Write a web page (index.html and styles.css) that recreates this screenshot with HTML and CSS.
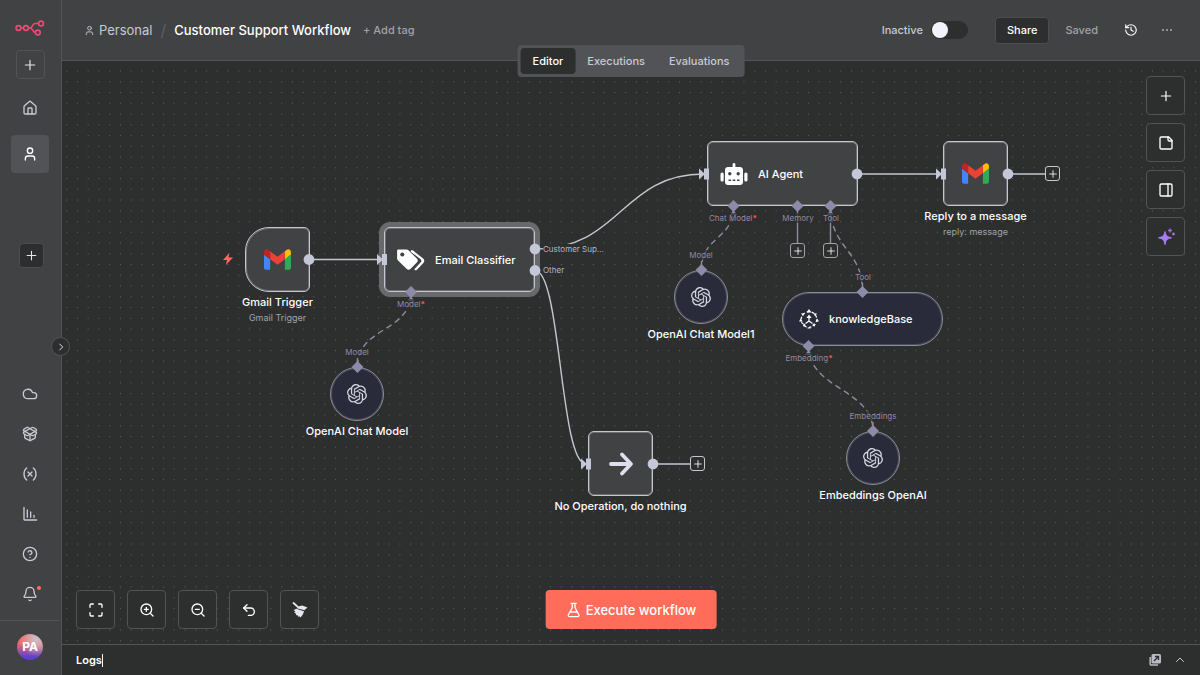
FILE: index.html
```
<!DOCTYPE html>
<html lang="en">
<head>
    <meta charset="UTF-8">
    <title>Customer Support Workflow</title>
    <link rel="stylesheet" href="styles.css">
</head>
<body>
    <!-- shared icons -->
    <svg class="sprite" aria-hidden="true">
        <symbol id="i-plus" viewBox="0 0 24 24"><path d="M4 12h16M12 4v16"/></symbol>
        <symbol id="i-user" viewBox="0 0 24 24"><path d="M19 21v-2a4 4 0 0 0-4-4H9a4 4 0 0 0-4 4v2"/><circle cx="12" cy="7" r="4"/></symbol>
        <symbol id="i-gmail" viewBox="52 42 88 66">
            <path fill="#4285f4" d="M58 108h14V74L52 59v43c0 3.32 2.69 6 6 6"/>
            <path fill="#34a853" d="M120 108h14c3.32 0 6-2.69 6-6V59l-20 15"/>
            <path fill="#fbbc04" d="M120 48v26l20-15v-8c0-7.42-8.47-11.65-14.4-7.2"/>
            <path fill="#ea4335" d="M72 74V48l24 18 24-18v26L96 92"/>
            <path fill="#c5221f" d="M52 51v8l20 15V48l-5.6-4.2c-5.94-4.45-14.4-.22-14.4 7.2"/>
        </symbol>
        <symbol id="i-openai" viewBox="0 0 24 24"><path d="M22.2819 9.8211a5.9847 5.9847 0 0 0-.5157-4.9108 6.0462 6.0462 0 0 0-6.5098-2.9A6.0651 6.0651 0 0 0 4.9807 4.1818a5.9847 5.9847 0 0 0-3.9977 2.9 6.0462 6.0462 0 0 0 .7427 7.0966 5.98 5.98 0 0 0 .511 4.9107 6.051 6.051 0 0 0 6.5146 2.9001A5.9847 5.9847 0 0 0 13.2599 24a6.0557 6.0557 0 0 0 5.7718-4.2058 5.9894 5.9894 0 0 0 3.9977-2.9001 6.0557 6.0557 0 0 0-.7475-7.0729zm-9.022 12.6081a4.4755 4.4755 0 0 1-2.8764-1.0408l.1419-.0804 4.7783-2.7582a.7948.7948 0 0 0 .3927-.6813v-6.7369l2.02 1.1686a.071.071 0 0 1 .038.052v5.5826a4.504 4.504 0 0 1-4.4945 4.4944zm-9.6607-4.1254a4.4708 4.4708 0 0 1-.5346-3.0137l.142.0852 4.783 2.7582a.7712.7712 0 0 0 .7806 0l5.8428-3.3685v2.3324a.0804.0804 0 0 1-.0332.0615L9.74 19.9502a4.4992 4.4992 0 0 1-6.1408-1.6464zM2.3408 7.8956a4.485 4.485 0 0 1 2.3655-1.9728V11.6a.7664.7664 0 0 0 .3879.6765l5.8144 3.3543-2.0201 1.1685a.0757.0757 0 0 1-.071 0l-4.8303-2.7865A4.504 4.504 0 0 1 2.3408 7.872zm16.5963 3.8558L13.1038 8.364 15.1192 7.2a.0757.0757 0 0 1 .071 0l4.8303 2.7913a4.4944 4.4944 0 0 1-.6765 8.1042v-5.6772a.79.79 0 0 0-.407-.667zm2.0107-3.0231l-.142-.0852-4.7735-2.7818a.7759.7759 0 0 0-.7854 0L9.409 9.2297V6.8974a.0662.0662 0 0 1 .0284-.0615l4.8303-2.7866a4.4992 4.4992 0 0 1 6.6802 4.66zM8.3065 12.863l-2.02-1.1638a.0804.0804 0 0 1-.038-.0567V6.0742a4.4992 4.4992 0 0 1 7.3757-3.4537l-.142.0805L8.704 5.459a.7948.7948 0 0 0-.3927.6813zm1.0976-2.3654l2.602-1.4998 2.6069 1.4998v2.9994l-2.5974 1.4997-2.6067-1.4997Z"/></symbol>
    </svg>

    <!-- sidebar -->
    <aside class="sidebar">
        <a class="logo" href="#" aria-label="Home">
            <svg width="30" height="18" viewBox="0 0 30 18"><g fill="none" stroke="#ea4b71" stroke-width="1.6"><circle cx="3.5" cy="9" r="2.4"/><circle cx="11" cy="9" r="2.4"/><circle cx="26" cy="4.5" r="2.4"/><circle cx="22.8" cy="13.5" r="2.4"/><path d="M5.900 9h2.700M13.400 9h1.500c3.600 0 1.500-4.500 5.200-4.500h3.500M14.900 9c3.500 0 2.500 4.500 5.500 4.500"/></g></svg>
        </a>
        <button class="side-add" aria-label="Create"><svg class="icon" width="14" height="14"><use href="#i-plus"/></svg></button>
        <nav class="side-nav">
            <a class="side-link" href="#" aria-label="Overview"><svg class="icon" width="16" height="16" viewBox="0 0 24 24"><path d="M15 21v-8a1 1 0 0 0-1-1h-4a1 1 0 0 0-1 1v8"/><path d="M3 10a2 2 0 0 1 .7-1.500l7-6a2 2 0 0 1 2.600 0l7 6A2 2 0 0 1 21 10v9a2 2 0 0 1-2 2H5a2 2 0 0 1-2-2z"/></svg></a>
            <a class="side-link active" href="#" aria-label="Personal"><svg class="icon" width="16" height="16"><use href="#i-user"/></svg></a>
        </nav>
        <button class="project-add" aria-label="Add project"><svg class="icon" width="13" height="13"><use href="#i-plus"/></svg></button>
        <nav class="side-menu">
            <a href="#" aria-label="Admin panel"><svg class="icon" width="16" height="16" viewBox="0 0 24 24"><path d="M17.500 19H9a7 7 0 1 1 6.700-9h1.800a4.500 4.500 0 1 1 0 9Z"/></svg></a>
            <a href="#" aria-label="Templates"><svg class="icon" width="16" height="16" viewBox="0 0 24 24"><path d="M12 22v-9M15.200 2.200a1.700 1.700 0 0 1 1.600 0L21 4.600a1.600 1.600 0 0 1 0 2.800L8.800 14.200a1.700 1.700 0 0 1-1.700 0L3 11.700a1.600 1.600 0 0 1 0-2.800z"/><path d="M20 13v3.900a2 2 0 0 1-1.100 1.800l-6 3a2 2 0 0 1-1.900 0l-6-3A2 2 0 0 1 4 16.900V13"/><path d="M21 12a1.600 1.600 0 0 0 0-2.800L8.900 2.200a2 2 0 0 0-1.800 0L3 4.600a1.600 1.600 0 0 0 0 2.800l12.100 6.800a2 2 0 0 0 1.800 0z"/></svg></a>
            <a href="#" aria-label="Variables"><svg class="icon" width="16" height="16" viewBox="0 0 24 24"><path d="M7 21s-4-3-4-9 4-9 4-9M17 3s4 3 4 9-4 9-4 9M15 9l-6 6M9 9l6 6"/></svg></a>
            <a href="#" aria-label="Insights"><svg class="icon" width="16" height="16" viewBox="0 0 24 24"><path d="M3 2v18a1 1 0 0 0 1 1h18M8 6v11M13 9v8M18 14v3"/></svg></a>
            <a href="#" aria-label="Help"><svg class="icon" width="16" height="16" viewBox="0 0 24 24"><circle cx="12" cy="12" r="10"/><path d="M9.100 9a3 3 0 0 1 5.800 1c0 2-3 3-3 3M12 17v.1"/></svg></a>
            <a href="#" aria-label="What's new" class="has-update"><svg class="icon" width="16" height="16" viewBox="0 0 24 24"><path d="M10.300 21a2 2 0 0 0 3.400 0M3.300 15.300A1 1 0 0 0 4 17h16a1 1 0 0 0 .7-1.700C19.400 14 18 12.500 18 8A6 6 0 0 0 6 8c0 4.500-1.400 6-2.700 7.300"/></svg></a>
        </nav>
        <div class="side-user"><button class="avatar">PA</button></div>
        <button class="collapse" aria-label="Expand sidebar"><svg class="icon" width="10" height="10" viewBox="0 0 24 24"><path d="m9 19 7-7-7-7"/></svg></button>
    </aside>

    <div class="main">
        <header class="header">
            <a class="project" href="#"><svg class="icon" width="11" height="11"><use href="#i-user"/></svg>Personal</a>
            <span class="slash">/</span>
            <h1>Customer Support Workflow</h1>
            <button class="add-tag">+ Add tag</button>
            <div class="actions">
                <label class="activator">Inactive <input type="checkbox" role="switch"></label>
                <button class="share">Share</button>
                <span class="saved">Saved</span>
                <button class="bare" aria-label="History"><svg class="icon bright" width="14" height="14" viewBox="0 0 24 24"><path d="M3 12a9 9 0 1 0 9-9 9.800 9.800 0 0 0-6.700 2.700L3 8"/><path d="M3 3v5h5M12 7v5l4 2"/></svg></button>
                <button class="bare" aria-label="More"><svg width="12" height="12" viewBox="0 0 12 12" fill="#a9abb5"><circle cx="2" cy="6" r="1"/><circle cx="6" cy="6" r="1"/><circle cx="10" cy="6" r="1"/></svg></button>
            </div>
            <div class="tabs" role="tablist">
                <button role="tab" class="active" aria-selected="true">Editor</button>
                <button role="tab">Executions</button>
                <button role="tab">Evaluations</button>
            </div>
        </header>

        <main class="canvas">
            <!-- grid and connections -->
            <svg class="edges" width="100%" height="100%">
                <defs>
                    <pattern id="dots" x="-0.7" y="4.600" width="10.750" height="10.750" patternUnits="userSpaceOnUse"><circle cx="5.400" cy="5.400" r="0.600" fill="#626467"/></pattern>
                </defs>
                <rect width="100%" height="100%" fill="url(#dots)"/>
                <g class="edge-main">
                    <path d="M247 198.500H320"/>
                    <path d="M473 188C559 188 559 113 642 113"/>
                    <path d="M473 209.500C499 209.500 498 403 524 403"/>
                    <path d="M795 113H879"/>
                    <path d="M946 113H983"/>
                    <path d="M591 403H628"/>
                </g>
                <g class="edge-sub">
                    <path d="M735.500 145V182M768.500 145V182"/>
                    <g stroke-dasharray="6 4">
                        <path d="M349 231C349 272 295.500 265 295.500 306"/>
                        <path d="M671.500 145C671.500 180 639.500 174 639.500 209"/>
                        <path d="M768.500 145C768.500 188 800.500 188 800.500 231"/>
                        <path d="M746.500 285C746.500 328 811 328 811 370"/>
                    </g>
                    <path d="M295.500 297v9M639.500 200v9M800.500 222v9M811 361v9"/>
                </g>
            </svg>

            <!-- nodes -->
            <div class="node trigger gmail-trigger">
                <svg class="bolt" width="10" height="12" viewBox="0 0 10 12"><path d="M6.500 0 0 7h4l-1 5 7-7.500H5.500z" fill="#ff6d5a"/></svg>
                <div class="box"><svg width="27" height="21"><use href="#i-gmail"/></svg></div>
                <div class="name">Gmail Trigger</div>
                <div class="sub">Gmail Trigger</div>
            </div>

            <div class="node wide selected classifier">
                <div class="box">
                    <svg width="28" height="24" viewBox="0 0 28 24" fill="#fff"><path fill-rule="evenodd" d="M1.500 1.500h8c.7 0 1.400.3 1.900.8l8.600 8.400c1 1 1 2.600 0 3.600l-6.600 6.800c-1 1-2.600 1-3.600 0L1 12.400c-.6-.6-.9-1.200-.9-2V2.900c0-.8.600-1.400 1.400-1.400zM5.300 4.400a2.100 2.100 0 1 0 0 4.200 2.100 2.100 0 0 0 0-4.200z"/><path d="M14 2.500c.6-.7 1.400-.7 2 0l10.400 8.300c1.200 1.100 1.200 2.900 0 4.100l-6.700 7c-.6.6-1.400.6-2 .1-.3-.4-.2-.9.100-1.300l6-6.400c.8-.9.7-2.100-.1-3L14 3.900c-.4-.4-.4-1 0-1.400z"/></svg>
                    <span class="title">Email Classifier</span>
                </div>
            </div>

            <div class="node wide agent">
                <div class="box">
                    <svg width="28" height="24" viewBox="0 0 28 24"><path fill="#fff" fill-rule="evenodd" d="M14 1c.8 0 1.400.6 1.400 1.400V5H20c1.700 0 3 1.300 3 3v12c0 1.700-1.300 3-3 3H8c-1.700 0-3-1.300-3-3V8c0-1.700 1.300-3 3-3h4.600V2.400C12.600 1.600 13.200 1 14 1zM9.800 10a1.700 1.700 0 1 0 0 3.400 1.700 1.700 0 0 0 0-3.400zm8.400 0a1.700 1.700 0 1 0 0 3.400 1.700 1.700 0 0 0 0-3.400zM8.500 17.500v1.400H11v-1.400zm4.200 0v1.400h2.600v-1.400zm4.300 0v1.400h2.500v-1.400z"/><rect x="0.500" y="10.500" width="3.200" height="9" rx="1.500" fill="#fff"/><rect x="24.300" y="10.500" width="3.200" height="9" rx="1.500" fill="#fff"/></svg>
                    <span class="title">AI Agent</span>
                </div>
            </div>

            <div class="node reply">
                <div class="box"><svg width="27" height="21"><use href="#i-gmail"/></svg></div>
                <div class="name">Reply to a message</div>
                <div class="sub">reply: message</div>
            </div>

            <div class="node noop">
                <div class="box"><svg width="26" height="26" viewBox="0 0 26 26" fill="none" stroke="#dcdfee" stroke-width="3.800" stroke-linecap="round" stroke-linejoin="round"><path d="M3 13h19M14 3.500 23 13l-9 9.500"/></svg></div>
                <div class="name">No Operation, do nothing</div>
            </div>

            <div class="node model chat-model">
                <div class="box"><svg width="20" height="20" fill="#d6d6e0"><use href="#i-openai"/></svg></div>
                <div class="name">OpenAI Chat Model</div>
            </div>

            <div class="node model chat-model-1">
                <div class="box"><svg width="20" height="20" fill="#d6d6e0"><use href="#i-openai"/></svg></div>
                <div class="name">OpenAI Chat Model1</div>
            </div>

            <div class="node model tool knowledge">
                <div class="box">
                    <svg width="20" height="20" viewBox="0 0 20 20" fill="#fff" stroke="#fff" stroke-width="1.200"><circle cx="10" cy="10.500" r="7.800" fill="none" stroke-dasharray="2.600 2.300"/><path stroke="none" d="M10 0l2.500 3.500h-5zM10 5.500 12.600 9H7.400zM2 4.500l3.500-.2-1.500 3zM18 4.500l-3.500-.2 1.500 3zM0 12.500l1.800-3 1.800 3zM20 12.500l-1.800-3-1.800 3zM4 17.500l.5-3.500 2.500 2.200zM16 17.500l-.5-3.500-2.500 2.200z"/><path fill="none" d="M10 8v5M10 12l-3.500 2.500M10 12l3.500 2.500M8.500 19h3"/></svg>
                    <span class="title">knowledgeBase</span>
                </div>
            </div>

            <div class="node model embeddings">
                <div class="box"><svg width="20" height="20" fill="#d6d6e0"><use href="#i-openai"/></svg></div>
                <div class="name">Embeddings OpenAI</div>
            </div>

            <!-- connection points -->
            <svg class="handles" width="100%" height="100%">
                <defs>
                    <g id="in"><path d="M-5-5.500 1 0l-6 5.500z"/><rect y="-5.500" width="5" height="11"/></g>
                    <circle id="out" r="5.400"/>
                    <path id="dia" d="M0-6 6 0 0 6-6 0z"/>
                    <path id="req" d="M0 4-3.500 9h7z"/>
                </defs>
                <g fill="#c3c7d8">
                    <use href="#in" x="320" y="198.500"/><use href="#in" x="642" y="113"/><use href="#in" x="879" y="113"/><use href="#in" x="524" y="403"/>
                    <use href="#out" x="247" y="198.500"/><use href="#out" x="473" y="188"/><use href="#out" x="473" y="209.500"/><use href="#out" x="795" y="113"/><use href="#out" x="946" y="113"/><use href="#out" x="591" y="403"/>
                </g>
                <g fill="#8d8ba8">
                    <use href="#dia" x="349" y="231"/><use href="#dia" x="671.500" y="145"/><use href="#dia" x="735.500" y="145"/><use href="#dia" x="768.500" y="145"/><use href="#dia" x="746.500" y="285"/>
                    <use href="#dia" x="295.500" y="306"/><use href="#dia" x="639.500" y="209"/><use href="#dia" x="800.500" y="231"/><use href="#dia" x="811" y="370"/>
                    <use href="#req" x="349" y="231"/><use href="#req" x="671.500" y="145"/><use href="#req" x="768.500" y="145"/><use href="#req" x="746.500" y="285"/>
                </g>
            </svg>

            <span class="port out port-customer">Customer Sup...</span>
            <span class="port out port-other">Other</span>
            <span class="port port-model">Model<b>*</b></span>
            <span class="port port-chat">Chat Model<b>*</b></span>
            <span class="port port-memory">Memory</span>
            <span class="port port-tool">Tool</span>
            <span class="port port-embedding">Embedding<b>*</b></span>
            <span class="port port-model-in">Model</span>
            <span class="port port-model1-in">Model</span>
            <span class="port port-tool-in">Tool</span>
            <span class="port port-embeddings-in">Embeddings</span>

            <button class="plus plus-reply" aria-label="Add node"><svg class="icon" width="10" height="10"><use href="#i-plus"/></svg></button>
            <button class="plus plus-noop" aria-label="Add node"><svg class="icon" width="10" height="10"><use href="#i-plus"/></svg></button>
            <button class="plus sub-plus plus-memory" aria-label="Add memory"><svg class="icon" width="10" height="10"><use href="#i-plus"/></svg></button>
            <button class="plus sub-plus plus-tool" aria-label="Add tool"><svg class="icon" width="10" height="10"><use href="#i-plus"/></svg></button>

            <!-- floating controls -->
            <div class="tools">
                <button class="tool-btn" aria-label="Add node"><svg class="icon" width="14" height="14"><use href="#i-plus"/></svg></button>
                <button class="tool-btn" aria-label="Add sticky note"><svg class="icon" width="16" height="16" viewBox="0 0 24 24"><path d="M16 3H5a2 2 0 0 0-2 2v14a2 2 0 0 0 2 2h14a2 2 0 0 0 2-2V8z"/><path d="M15 3v4a2 2 0 0 0 2 2h4"/></svg></button>
                <button class="tool-btn" aria-label="Focus panel"><svg class="icon" width="16" height="16" viewBox="0 0 24 24"><rect x="3" y="3" width="18" height="18" rx="2"/><path d="M15 3v18"/></svg></button>
                <button class="tool-btn" aria-label="Ask AI"><svg width="18" height="18" viewBox="0 0 18 18"><defs><linearGradient id="ai" x1="1" x2="0" y1="0" y2="1"><stop stop-color="#b86cf0"/><stop offset="1" stop-color="#9a8bff"/></linearGradient></defs><path fill="url(#ai)" stroke="url(#ai)" stroke-linejoin="round" d="M8 3.500c1 4.300 2 5.300 6.500 6.300-4.500 1-5.500 2-6.500 6.700-1-4.700-2-5.700-6.500-6.700 4.500-1 5.500-2 6.500-6.300z"/><path d="M13 .5v4M11 2.500h4M16.500 4.500v3M15 6h3" stroke="#9a72d8" stroke-width="1.300"/></svg></button>
            </div>

            <div class="controls">
                <button class="tool-btn" aria-label="Fit view"><svg class="icon" width="16" height="16" viewBox="0 0 24 24"><path d="M8 3H5a2 2 0 0 0-2 2v3M21 8V5a2 2 0 0 0-2-2h-3M3 16v3a2 2 0 0 0 2 2h3M16 21h3a2 2 0 0 0 2-2v-3"/></svg></button>
                <button class="tool-btn" aria-label="Zoom in"><svg class="icon" width="16" height="16" viewBox="0 0 24 24"><circle cx="11" cy="11" r="8"/><path d="m21 21-4.300-4.300M11 8v6M8 11h6"/></svg></button>
                <button class="tool-btn" aria-label="Zoom out"><svg class="icon" width="16" height="16" viewBox="0 0 24 24"><circle cx="11" cy="11" r="8"/><path d="m21 21-4.300-4.300M8 11h6"/></svg></button>
                <button class="tool-btn" aria-label="Undo"><svg class="icon" width="16" height="16" viewBox="0 0 24 24"><path d="M9 14 4 9l5-5"/><path d="M4 9h10.500a5.500 5.500 0 0 1 0 11H11"/></svg></button>
                <button class="tool-btn" aria-label="Tidy up"><svg width="16" height="16" viewBox="0 0 16 16" fill="#e4e6f0"><path d="M1.500 1 6 5.200" stroke="#e4e6f0" stroke-width="1.800" stroke-linecap="round"/><path d="M4.800 6.200 7 4.200l3.200-.6L15.500 5.500 12.300 8.300 11.500 8.100z"/><path d="M4.200 6.800 12 9.300 11 12.200 8.600 15.500 7.500 14.300 6.600 15 5.600 13.300 4.300 13.200 3.600 11.300 2.200 10.800 3.400 9.300 1.500 8.200z"/></svg></button>
            </div>

            <button class="execute"><svg class="icon" width="16" height="16" viewBox="0 0 24 24"><path d="M14 2v6a2 2 0 0 0 .3 1l5.500 10a2 2 0 0 1-1.800 3H6a2 2 0 0 1-1.800-3l5.500-10A2 2 0 0 0 10 8V2M6.500 15h11M8 2h8"/></svg>Execute workflow</button>
        </main>

        <footer class="logs">
            <span class="logs-title">Logs</span>
            <button class="bare" aria-label="Pop out"><svg width="12" height="12" viewBox="0 0 12 12"><path d="M1.200 3v7.200a.7.700 0 0 0 .7.700h7.200" fill="none" stroke="#b9bbc6" stroke-width="1.500"/><rect x="2.500" width="9.500" height="9.500" rx="1.500" fill="#b9bbc6"/><path d="M5 7 9 3M6 2.500h3.500V6" fill="none" stroke="#2d2e2e" stroke-width="1.300"/></svg></button>
            <button class="bare" aria-label="Open logs"><svg class="icon" width="12" height="12" viewBox="0 0 24 24"><path d="m5 15 7-7 7 7"/></svg></button>
        </footer>
    </div>
</body>
</html>
```
FILE: styles.css
```
* { box-sizing: border-box; }
body { margin: 0; height: 100vh; display: flex; overflow: hidden; background: #2d2e2e; color: #fff; font: 12px/16px Inter, sans-serif; }
button { font: inherit; color: inherit; margin: 0; padding: 0; border: 0; background: none; cursor: pointer; display: flex; align-items: center; justify-content: center; }
a { color: inherit; text-decoration: none; }
svg { display: block; flex: none; }
.sprite { position: absolute; width: 0; height: 0; }
.icon { fill: none; stroke: currentColor; stroke-width: 2; stroke-linecap: round; stroke-linejoin: round; }
.bright { color: #fff; }

/* sidebar */
.sidebar { position: relative; z-index: 2; width: 62px; flex: none; display: flex; flex-direction: column; align-items: center; padding: 19px 1px 0 0; background: #414244; border-right: 1px solid #525356; color: #c8cad4; }
.side-add { width: 29px; height: 29px; margin-top: 13px; border: 1px solid #525356; border-radius: 4px; color: #e4e6f0; }
.side-nav { display: flex; flex-direction: column; gap: 8px; margin-top: 10px; }
.side-link { width: 38px; height: 38px; display: flex; align-items: center; justify-content: center; border-radius: 4px; }
.side-link.active { background: #525356; color: #fff; }
.project-add { width: 25px; height: 25px; margin: 70px 0 0 3px; border: 1px solid #4b4c4f; border-radius: 4px; background: #2d2e2e; color: #e4e6f0; }
.side-menu { margin-top: auto; padding-bottom: 6px; }
.side-menu a { position: relative; width: 40px; height: 40px; display: flex; align-items: center; justify-content: center; }
.has-update::after { content: ""; position: absolute; top: 12px; right: 9px; width: 4px; height: 4px; border-radius: 50%; background: #ff6d5a; }
.side-user { width: 100%; height: 55px; padding-bottom: 3px; display: flex; align-items: center; justify-content: center; border-top: 1px solid #525356; }
.avatar { width: 26px; height: 26px; border-radius: 50%; font-weight: 700; color: #fff; background: radial-gradient(circle at 75% 20%, #c9c4cc 0, #c9c4cc88 30%, transparent 60%), linear-gradient(#f06a68 35%, #5a3fd0 90%); }
.collapse { position: absolute; right: -9px; top: 337px; width: 19px; height: 19px; border: 1px solid #525356; border-radius: 50%; background: #2d2e2e; color: #fff; }

/* header */
.main { flex: 1; min-width: 0; display: flex; flex-direction: column; }
.header { position: relative; z-index: 1; height: 61px; flex: none; display: flex; align-items: center; padding: 0 27px 0 22px; background: #414244; border-bottom: 1px solid #525356; font-size: 11px; }
.project { display: flex; align-items: center; gap: 4px; font-size: 13px; color: #c8cad4; }
.slash { margin: 0 8px; font-size: 16px; color: #5e6064; }
h1 { margin: 0; font-size: 13px; font-weight: 500; }
.add-tag { margin-left: 12px; font-weight: 500; color: #a0a2ac; }
.actions { display: flex; align-items: center; margin-left: auto; font-weight: 500; }
.activator { display: flex; align-items: center; gap: 8px; color: #c8cad4; }
.activator input { appearance: none; width: 37px; height: 18px; margin: 0; border-radius: 9px; background: #2d2e2e; }
.activator input::before { content: ""; display: block; width: 16px; height: 16px; margin: 1px; border-radius: 50%; background: #f2f2fa; }
.share { height: 27px; padding: 0 11px; margin-left: 27px; border: 1px solid #4b4c4f; border-radius: 4px; background: #2d2e2e; }
.saved { margin: 0 26px 0 16px; color: #a0a2ac; }
.bare { color: #c8cad4; }
.actions .bare + .bare { margin-left: 23px; }
.tabs { position: absolute; left: 50%; top: 45px; transform: translateX(-50%); display: flex; padding: 3px; border-radius: 4px; background: #525356; }
.tabs button { height: 26px; padding: 0 12px; border-radius: 4px; font-weight: 500; color: #c8cad4; }
.tabs .active { background: #2d2e2e; color: #fff; }

/* canvas */
.canvas { position: relative; flex: 1; min-height: 0; overflow: hidden; }
.edges, .handles { position: absolute; left: 0; top: 0; pointer-events: none; }
.edge-main { fill: none; stroke: #c3c7d0; stroke-width: 1.400; }
.edge-sub { fill: none; stroke: #8d8b9c; stroke-width: 1.400; }

/* nodes */
.node { position: absolute; width: 65px; display: flex; flex-direction: column; align-items: center; white-space: nowrap; }
.box { width: 100%; height: 65px; display: flex; align-items: center; justify-content: center; border: 1px solid #c3c7d0; border-radius: 6px; background: #414244; box-shadow: inset 0 0 0 1px #c3c7d055; }
.name { margin-top: 2px; font-size: 11px; font-weight: 500; }
.sub { font-size: 9px; line-height: 15px; color: #a0a2ac; }
.title { font-size: 11px; font-weight: 500; }
.bolt { position: absolute; left: -22px; top: 26px; }
.trigger .box { border-radius: 24px 6px 6px 24px; }
.wide { width: 151px; }
.wide .box { justify-content: flex-start; gap: 10px; padding-left: 12px; }
.selected .box { box-shadow: inset 0 0 0 1px #c3c7d055, 0 0 0 5px #68696a; }
.model { width: 54px; }
.model .box { height: 54px; border-color: #8d8d98; border-radius: 27px; background: #2a2b3a; box-shadow: inset 0 0 0 1px #8d8d9855; }
.tool { width: 161px; }
.tool .box { justify-content: flex-start; gap: 10px; padding-left: 16px; }
.gmail-trigger { left: 183px; top: 166px; }
.classifier { left: 322px; top: 166px; }
.agent { left: 645px; top: 80px; }
.reply { left: 881px; top: 80px; }
.noop { left: 526px; top: 370px; }
.chat-model { left: 268px; top: 306px; }
.chat-model-1 { left: 612px; top: 209px; }
.knowledge { left: 720px; top: 231px; }
.embeddings { left: 784px; top: 370px; }

/* port labels, centred on their point */
.port { position: absolute; transform: translateX(-50%); font-size: 8px; line-height: 10px; color: #8d8ba8; background: #2d2e2eb3; white-space: nowrap; }
.port b { color: #ff4d5a; }
.port.out { transform: none; color: #b4b7c4; background: #2d2e2e; }
.port-customer { left: 481px; top: 183px; }
.port-other { left: 481px; top: 204px; }
.port-model { left: 349px; top: 238px; }
.port-chat { left: 671px; top: 152px; }
.port-memory { left: 736px; top: 152px; }
.port-tool { left: 769px; top: 152px; }
.port-embedding { left: 747px; top: 292px; }
.port-model-in { left: 295px; top: 286px; }
.port-model1-in { left: 639px; top: 189px; }
.port-tool-in { left: 801px; top: 211px; }
.port-embeddings-in { left: 811px; top: 350px; }

.plus { position: absolute; width: 15px; height: 15px; border: 1px solid #c3c7d0; border-radius: 3px; background: #2d2e2e; }
.sub-plus { border-color: #a0a2ac; }
.plus-reply { left: 983px; top: 105px; }
.plus-noop { left: 628px; top: 395px; }
.plus-memory { left: 728px; top: 182px; }
.plus-tool { left: 761px; top: 182px; }

/* floating controls */
.tools { position: absolute; top: 15px; right: 15px; display: flex; flex-direction: column; gap: 8px; }
.controls { position: absolute; left: 14px; bottom: 15px; display: flex; gap: 12px; }
.tool-btn { width: 39px; height: 39px; border: 1px solid #525356; border-radius: 4px; background: #2d2e2e; }
.execute { position: absolute; left: 50%; bottom: 15px; transform: translateX(-50%); height: 39px; padding: 0 20px; gap: 4px; border-radius: 4px; background: #ff6d5a; font-size: 13px; font-weight: 500; white-space: nowrap; }

/* logs */
.logs { height: 31px; flex: none; display: flex; align-items: center; gap: 13px; padding: 0 14px; border-top: 1px solid #525356; }
.logs-title { margin-right: auto; border-right: 1px solid #fff; line-height: 13px; font-size: 11px; font-weight: 600; }
```
